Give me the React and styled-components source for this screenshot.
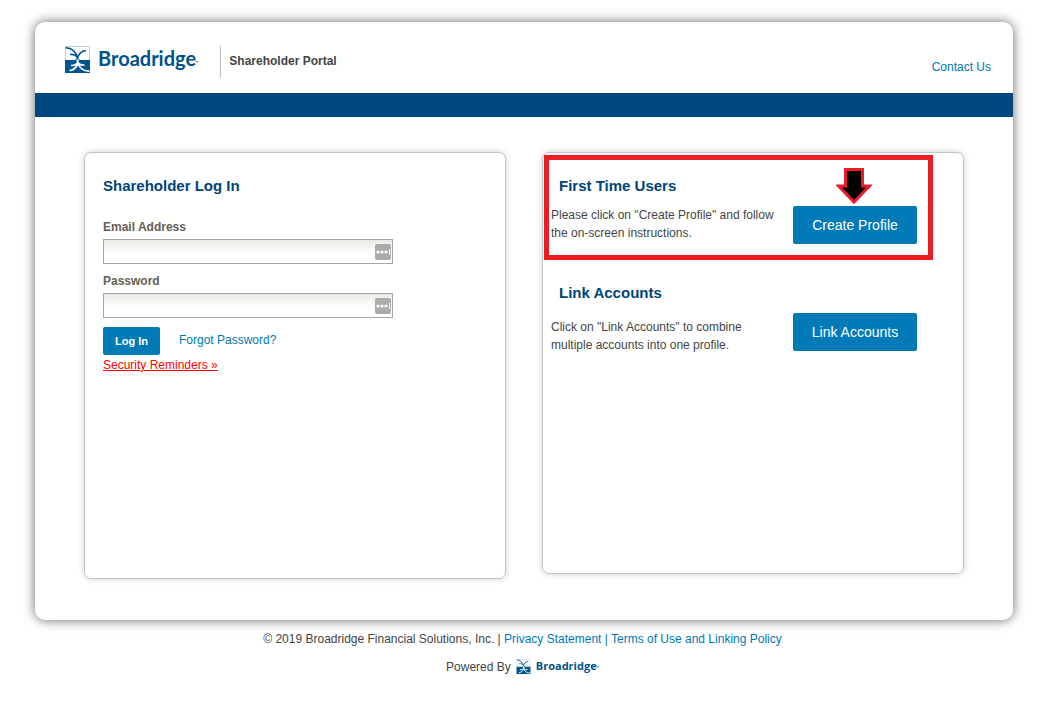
import React, { useState } from "react";
import styled, { createGlobalStyle } from "styled-components";

const GlobalStyle = createGlobalStyle`
  * {
    box-sizing: border-box;
  }

  body {
    margin: 0;
    background: #fff;
    color: #444;
    font-family: "Liberation Sans", Arial, sans-serif;
    font-size: 12px;
    line-height: 18px;
  }

  h2,
  p {
    margin: 0;
  }
`;

const Page = styled.div`
  padding: 22px 44px 24px 35px;
`;

const Sheet = styled.div`
  background: #fff;
  border-radius: 10px;
  box-shadow: 0 0 12px rgba(0, 0, 0, 0.6);
`;

const Header = styled.header`
  display: flex;
  align-items: center;
  padding: 18px 22px 10px 30px;
  min-height: 71px;
`;

const Brand = styled.div`
  display: flex;
  align-items: center;
  gap: ${(props) => (props.$small ? "5px" : "8px")};
  padding-bottom: ${(props) => (props.$small ? "0" : "5px")};
  color: #00528c;
  font-family: ${(props) => (props.$small ? "Open Sans" : "Lato")}, sans-serif;
  font-size: ${(props) => (props.$small ? "11px" : "20px")};
  font-weight: bold;
  line-height: ${(props) => (props.$small ? "18px" : "28px")};

  svg {
    width: ${(props) => (props.$small ? "15px" : "25px")};
    height: ${(props) => (props.$small ? "15px" : "27px")};
  }
`;

const Dot = styled.small`
  font-size: 8px;
  vertical-align: middle;
`;

const Tagline = styled.p`
  margin-left: 22px;
  padding: 6px 0 8px 8px;
  border-left: 1px solid #bbb;
  font-weight: bold;
`;

const Link = styled.a`
  color: ${(props) => (props.$alert ? "#ff0000" : "#0077b3")};
  text-decoration: ${(props) => (props.$alert ? "underline" : "none")};
`;

const HeaderNav = styled.nav`
  margin-left: auto;
  padding-top: 10px;
`;

const Band = styled.div`
  height: 24px;
  background: #004680;
`;

const Content = styled.main`
  display: grid;
  grid-template-columns: 1fr 1fr;
  align-items: start;
  gap: 36px;
  padding: 35px 49px 41px;
`;

const Panel = styled.section`
  position: relative;
  min-height: ${(props) => (props.$tall ? "427px" : "422px")};
  padding: ${(props) => (props.$tall ? "24px 18px" : "24px 46px 24px 8px")};
  border: 1px solid #c4c4c4;
  border-radius: 7px;
  box-shadow: 0 0 6px rgba(0, 0, 0, 0.2);
`;

const Title = styled.h2`
  color: #00447c;
  font-size: 15px;
  line-height: 18px;
`;

const Form = styled.form`
  margin-top: 23px;
`;

const Field = styled.div`
  position: relative;
  width: 290px;
  max-width: 100%;
  margin-bottom: 8px;

  svg {
    position: absolute;
    right: 2px;
    bottom: 4px;
  }
`;

const Label = styled.label`
  display: block;
  margin-bottom: 3px;
  color: #665e55;
  font-weight: bold;
`;

const Input = styled.input`
  display: block;
  width: 100%;
  height: 25px;
  padding: 2px 22px 2px 4px;
  border: 1px solid #a5a5a5;
  background: linear-gradient(#ebebe5, #fff 60%);
  font: inherit;
`;

const Actions = styled.div`
  display: flex;
  align-items: flex-start;
  gap: 19px;
  margin-top: 9px;
  margin-bottom: 1px;

  a {
    padding-top: 4px;
  }
`;

const Button = styled.button`
  flex: none;
  border: 0;
  border-radius: 2px;
  background: #007bb8;
  color: #fff;
  font-family: inherit;
  cursor: pointer;
`;

const LoginButton = styled(Button)`
  padding: 5px 12px;
  font-size: 11px;
  font-weight: bold;
  line-height: 18px;
`;

const ActionButton = styled(Button)`
  width: 124px;
  height: 38px;
  font-size: 14px;
`;

const Option = styled.div`
  display: grid;
  grid-template-columns: 1fr auto;
  row-gap: 11px;
  margin-bottom: 40px;

  ${Title} {
    grid-column: 1 / -1;
    padding-left: 8px;
  }

  p {
    max-width: 230px;
    padding-top: ${(props) => (props.$lower ? "5px" : "0")};
  }
`;

const Highlight = styled.div`
  position: absolute;
  top: 2px;
  left: 1px;
  right: 30px;
  height: 105px;
  border: 5px solid #ed1c24;
  pointer-events: none;

  svg {
    position: absolute;
    top: 8px;
    right: 56px;
  }
`;

const Footer = styled.footer`
  display: flex;
  flex-direction: column;
  align-items: center;
  gap: 9px;
  padding: 10px 3px 0 0;
`;

const Powered = styled.div`
  display: flex;
  align-items: center;
  gap: 5px;
`;

const Logo = ({ small }) => (
  <Brand $small={small}>
    <svg viewBox="0 0 25 27" fill="none" aria-hidden="true">
      <path d="M0.5 0.5h24v26h-24z" fill="#fff" stroke="#b9d0e2" />
      <path d="M0 14h10l2.500-2 2.500 2h10v13H0z" fill="#00558f" />
      <path
        d="M0.500 1.800C6 2 11 4.500 12.500 12.500M21 4.500C16.500 5 13.500 8 12.500 12.500M5 8.500C8 8 10.500 9 12 11"
        stroke="#00558f"
        strokeWidth="1.600"
      />
      <path
        d="M12.300 13.500C14 19 10 24 4.500 24.500M12.700 13.500C13 21 17.500 25.500 24.500 25M6 19.500Q10.500 19.500 12.500 17M13.500 17.500Q16 19.500 19.500 19"
        stroke="#fff"
        strokeWidth="1.700"
      />
    </svg>
    <span>
      Broadridge<Dot>·</Dot>
    </span>
  </Brand>
);

const FieldIcon = () => (
  <svg width="16" height="16" viewBox="0 0 16 16" aria-hidden="true">
    <rect width="16" height="16" rx="2" fill="#ababab" />
    <g fill="#fff">
      <circle cx="3" cy="8" r="1.600" />
      <circle cx="7" cy="8" r="1.600" />
      <circle cx="11" cy="8" r="1.600" />
      <rect x="14" y="5" width="1" height="6" />
    </g>
  </svg>
);

const Arrow = () => (
  <svg width="36" height="37" viewBox="0 0 36 37" aria-hidden="true">
    <path
      d="M9.500 1.500h17v16.500h7L18 34L2.500 18h7z"
      fill="#000"
      stroke="#ed1c24"
      strokeWidth="3"
    />
  </svg>
);

const LoginForm = () => {
  const [values, setValues] = useState({ email: "", password: "" });

  const handleChange = (e) => {
    setValues({ ...values, [e.target.name]: e.target.value });
  };

  return (
    <Form onSubmit={(e) => e.preventDefault()}>
      <Field>
        <Label htmlFor="email">Email Address</Label>
        <Input
          id="email"
          name="email"
          type="text"
          value={values.email}
          onChange={handleChange}
        />
        <FieldIcon />
      </Field>
      <Field>
        <Label htmlFor="password">Password</Label>
        <Input
          id="password"
          name="password"
          type="password"
          value={values.password}
          onChange={handleChange}
        />
        <FieldIcon />
      </Field>
      <Actions>
        <LoginButton type="submit">Log In</LoginButton>
        <Link href="#forgot">Forgot Password?</Link>
      </Actions>
      <Link href="#security" $alert>
        Security Reminders »
      </Link>
    </Form>
  );
};

const App = () => (
  <>
    <GlobalStyle />
    <Page>
      <Sheet>
        <Header>
          <Logo />
          <Tagline>Shareholder Portal</Tagline>
          <HeaderNav>
            <Link href="#contact">Contact Us</Link>
          </HeaderNav>
        </Header>
        <Band />
        <Content>
          <Panel $tall>
            <Title>Shareholder Log In</Title>
            <LoginForm />
          </Panel>
          <Panel>
            <Option>
              <Title>First Time Users</Title>
              <p>
                Please click on "Create Profile" and follow the on-screen
                instructions.
              </p>
              <ActionButton type="button">Create Profile</ActionButton>
            </Option>
            <Option $lower>
              <Title>Link Accounts</Title>
              <p>
                Click on "Link Accounts" to combine multiple accounts into one
                profile.
              </p>
              <ActionButton type="button">Link Accounts</ActionButton>
            </Option>
            <Highlight>
              <Arrow />
            </Highlight>
          </Panel>
        </Content>
      </Sheet>
      <Footer>
        <p>
          © 2019 Broadridge Financial Solutions, Inc. |{" "}
          <Link href="#privacy">Privacy Statement</Link>{" "}
          <Link as="span">|</Link>{" "}
          <Link href="#terms">Terms of Use and Linking Policy</Link>
        </p>
        <Powered>
          Powered By
          <Logo small />
        </Powered>
      </Footer>
    </Page>
  </>
);

export default App;
